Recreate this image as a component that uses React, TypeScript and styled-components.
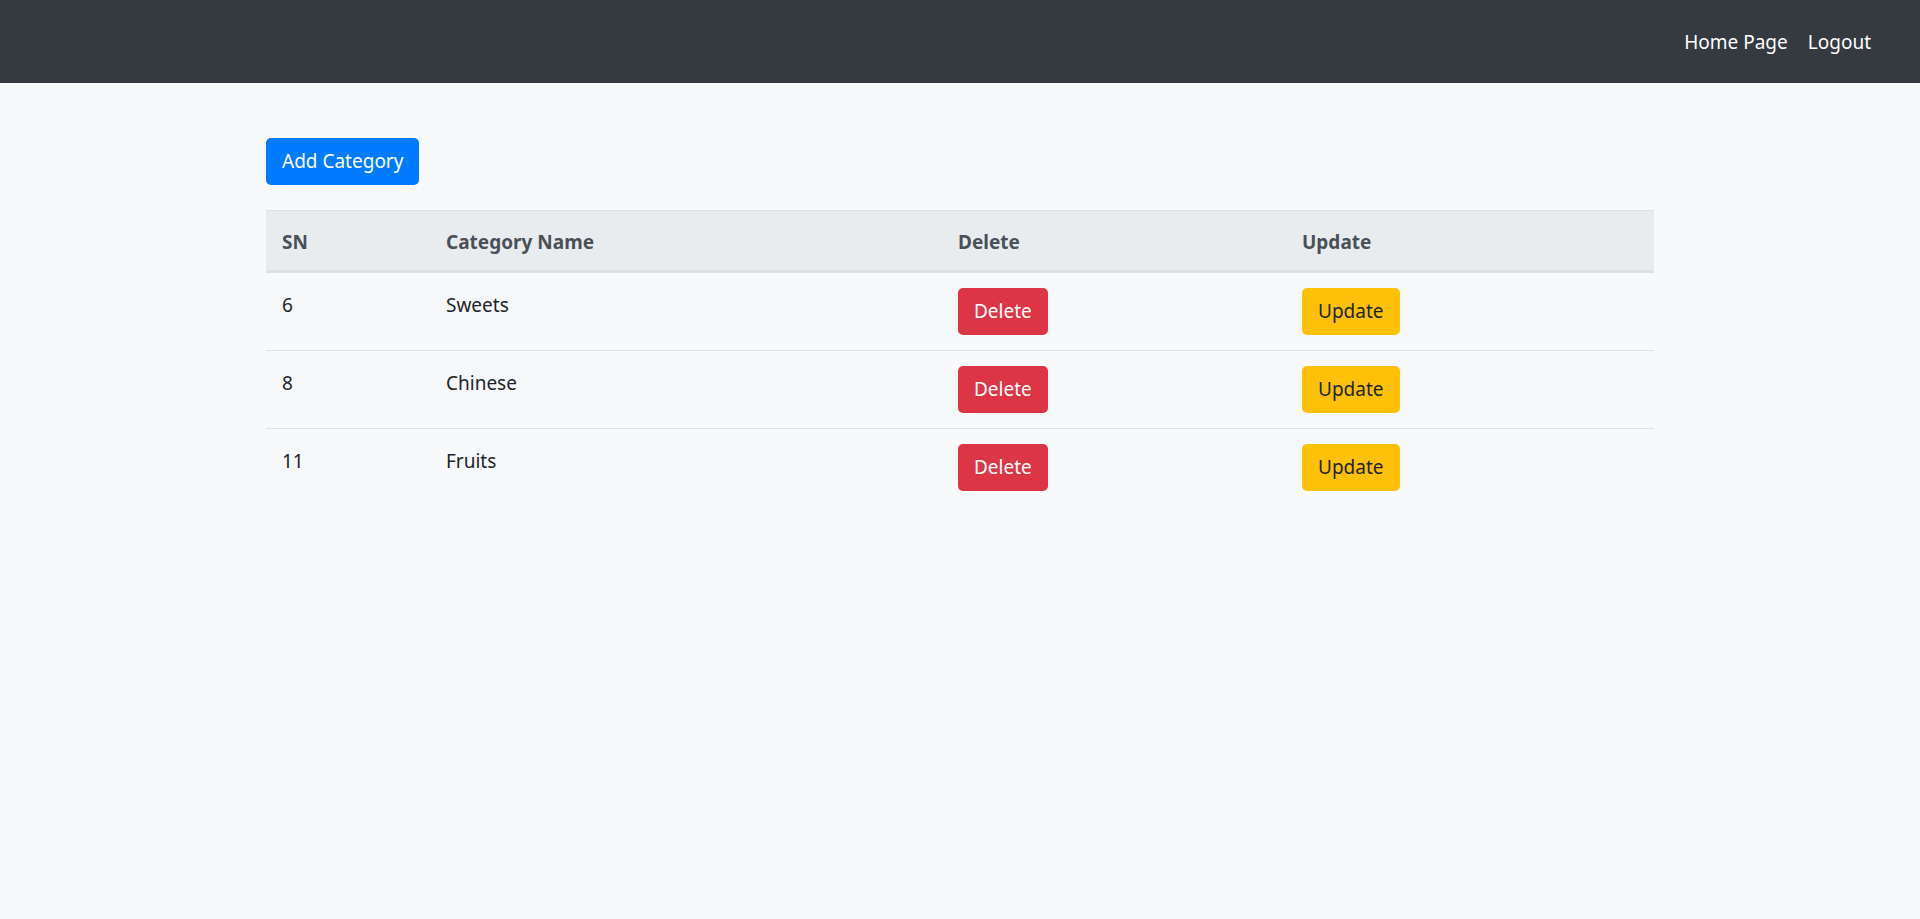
import React from "react";
import styled, { createGlobalStyle } from "styled-components";

const Global = createGlobalStyle`
  html, body { margin: 0; padding: 0; }
  body {
    background: #f8f9fa;
    font-family: "Noto Sans", "Open Sans", sans-serif;
    font-size: 20px;
    color: #212529;
    min-height: 919px;
  }
`;

const Navbar = styled.nav`
  height: 83px;
  background: #343a40;
  display: flex;
  align-items: center;
  justify-content: flex-end;
  padding: 0 49px 0 0;
  box-sizing: border-box;
`;

const NavLink = styled.a`
  color: #fff;
  text-decoration: none;
  font-size: 19px;
  line-height: 30px;
  margin-left: 20px;
`;

const Container = styled.main`
  width: 1388px;
  margin: 0 auto;
  padding-top: 55px;
`;

const Button = styled.button<{ $variant: "primary" | "danger" | "warning" }>`
  font-family: inherit;
  font-size: 19px;
  line-height: 29px;
  padding: 8px 15px;
  border: 1px solid transparent;
  border-radius: 5px;
  cursor: pointer;
  background: ${(p) =>
    p.$variant === "primary" ? "#007bff" : p.$variant === "danger" ? "#dc3545" : "#ffc107"};
  color: ${(p) => (p.$variant === "warning" ? "#212529" : "#fff")};
`;

const Table = styled.table`
  margin-top: 25px;
  width: 1388px;
  border-collapse: collapse;
  table-layout: fixed;
`;

const Th = styled.th<{ $w: number }>`
  box-sizing: border-box;
  width: ${(p) => p.$w}px;
  text-align: left;
  background: #e9ecef;
  color: #495057;
  font-weight: 700;
  font-size: 19px;
  line-height: 29px;
  padding: 17px 15px 13px 16px;
  border-top: 1px solid #dee2e6;
  border-bottom: 3px solid #dee2e6;
`;

const Td = styled.td<{ $text?: boolean }>`
  font-size: 19px;
  line-height: 30px;
  padding: ${(p) => (p.$text ? "17px 15px 13px 16px" : "15px 15px 15px 16px")};
  vertical-align: top;
  border-top: 1px solid #dee2e6;
`;

const rows = [
  { sn: 6, name: "Sweets" },
  { sn: 8, name: "Chinese" },
  { sn: 11, name: "Fruits" },
];

export default function App() {
  return (
    <>
      <Global />
      <Navbar>
        <NavLink href="#">Home Page</NavLink>
        <NavLink href="#">Logout</NavLink>
      </Navbar>
      <Container>
        <Button $variant="primary">Add Category</Button>
        <Table>
          <thead>
            <tr>
              <Th $w={164}>SN</Th>
              <Th $w={512}>Category Name</Th>
              <Th $w={344}>Delete</Th>
              <Th $w={368}>Update</Th>
            </tr>
          </thead>
          <tbody>
            {rows.map((r) => (
              <tr key={r.sn}>
                <Td $text>{r.sn}</Td>
                <Td $text>{r.name}</Td>
                <Td>
                  <Button $variant="danger">Delete</Button>
                </Td>
                <Td>
                  <Button $variant="warning">Update</Button>
                </Td>
              </tr>
            ))}
          </tbody>
        </Table>
      </Container>
    </>
  );
}
